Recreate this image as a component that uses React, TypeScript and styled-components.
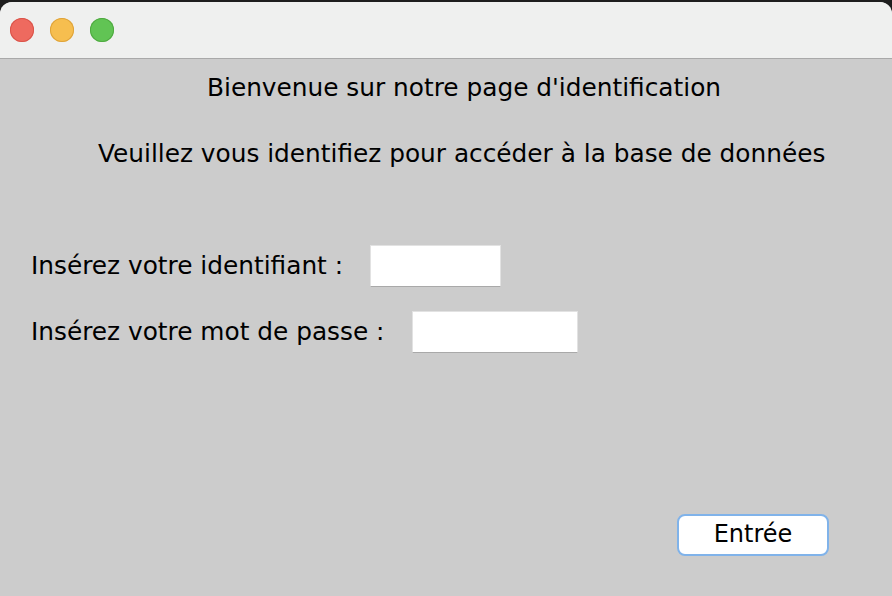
import React from "react";
import styled, { createGlobalStyle } from "styled-components";

const Global = createGlobalStyle`
  html, body { margin: 0; padding: 0; background: #1e1e1e; }
  body { font-family: "DejaVu Sans", "Liberation Sans", sans-serif; }
`;

const Window = styled.div`
  width: 892px;
  height: 594px;
  background: #cccccc;
  border-top-left-radius: 12px;
  border-top-right-radius: 12px;
  margin-top: 2px;
  overflow: hidden;
  display: flex;
  flex-direction: column;
  box-sizing: border-box;
`;

const TitleBar = styled.div`
  height: 57px;
  flex: none;
  background: #eff0ef;
  border-bottom: 1px solid #a9a9a9;
  display: flex;
  align-items: center;
  gap: 16px;
  padding-left: 10px;
  box-sizing: border-box;
`;

const Light = styled.span<{ $c: string; $b: string }>`
  width: 24px;
  height: 24px;
  border-radius: 50%;
  background: ${(p) => p.$c};
  box-shadow: inset 0 0 0 1px ${(p) => p.$b};
`;

const Content = styled.div`
  flex: 1;
  display: flex;
  flex-direction: column;
  color: #000;
  font-size: 24.8px;
`;

const Heading = styled.div<{ $left: number; $top: number }>`
  margin-left: ${(p) => p.$left}px;
  margin-top: ${(p) => p.$top}px;
  line-height: 28px;
  white-space: nowrap;
`;

const Row = styled.div<{ $top: number }>`
  display: flex;
  align-items: center;
  margin-left: 31px;
  margin-top: ${(p) => p.$top}px;
  height: 42px;
`;

const Label = styled.span`
  white-space: nowrap;
  line-height: 28px;
`;

const Field = styled.div<{ $left: number; $w: number }>`
  margin-left: ${(p) => p.$left}px;
  width: ${(p) => p.$w}px;
  height: 42px;
  background: #fff;
  box-sizing: border-box;
  border: 1px solid #e2e2e2;
  border-bottom: 1.5px solid #a9a9a9;
`;

const Footer = styled.div`
  margin-top: auto;
  display: flex;
  justify-content: flex-end;
  padding-right: 63px;
  padding-bottom: 40px;
`;

const Button = styled.div`
  width: 152px;
  height: 42px;
  box-sizing: border-box;
  border: 2px solid #80b3ea;
  border-radius: 8px;
  background: #fff;
  display: flex;
  align-items: center;
  justify-content: center;
  font-size: 24px;
  color: #000;
  padding-bottom: 2px;
`;

export default function App() {
  return (
    <>
      <Global />
      <Window>
        <TitleBar>
          <Light $c="#ee6a5f" $b="#d9544a" />
          <Light $c="#f6be4f" $b="#dea33a" />
          <Light $c="#61c454" $b="#4fa940" />
        </TitleBar>
        <Content>
          <Heading $left={207} $top={15}>Bienvenue sur notre page d'identification</Heading>
          <Heading $left={98} $top={38}>Veuillez vous identifiez pour accéder à la base de données</Heading>
          <Row $top={77}>
            <Label>Insérez votre identifiant :</Label>
            <Field $left={27} $w={131} />
          </Row>
          <Row $top={24}>
            <Label>Insérez votre mot de passe :</Label>
            <Field $left={28} $w={166} />
          </Row>
          <Footer>
            <Button>Entrée</Button>
          </Footer>
        </Content>
      </Window>
    </>
  );
}
